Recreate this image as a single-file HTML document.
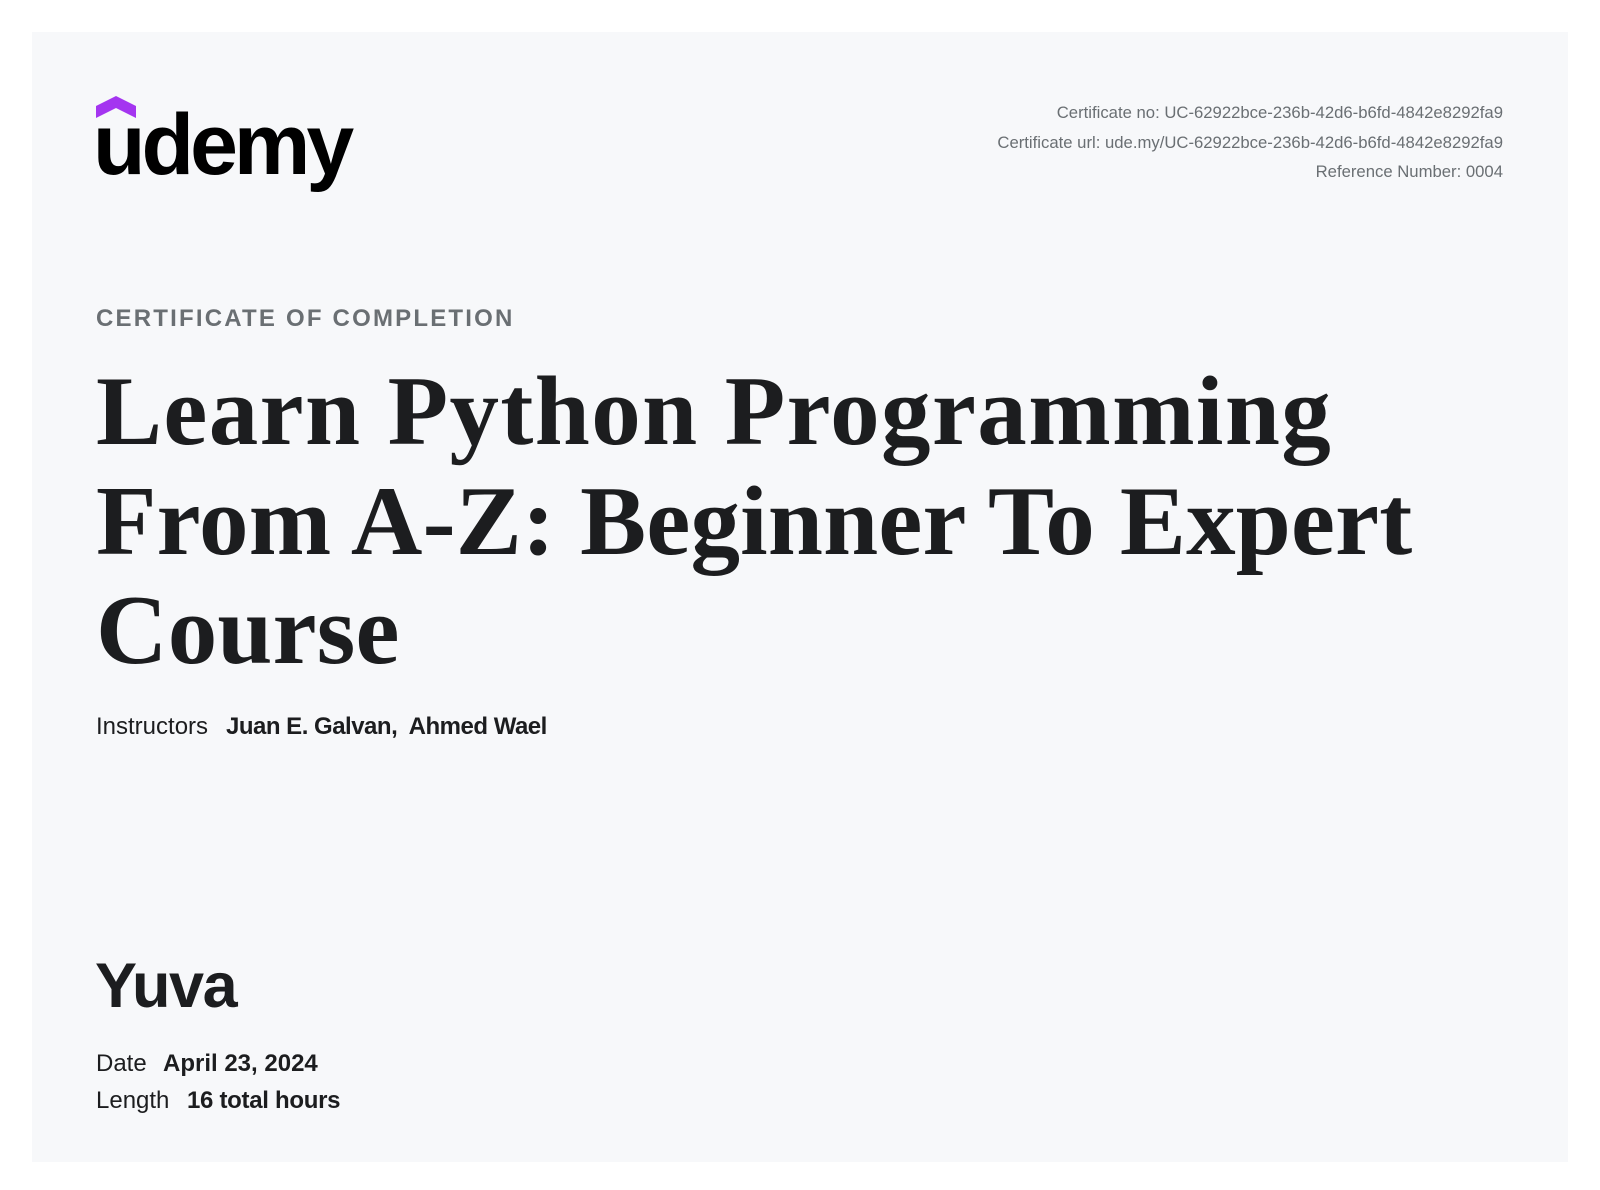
<!DOCTYPE html>
<html><head><meta charset="utf-8"><style>
*{margin:0;padding:0;box-sizing:border-box}
body{width:1600px;height:1190px;background:#fff;position:relative;overflow:hidden;font-family:"Liberation Sans",sans-serif;color:#1c1d1f}
.card{position:absolute;left:32px;top:32px;width:1536px;height:1130px;background:#f7f8fa}
.a{position:absolute;white-space:nowrap}
.meta{right:97px;font-size:16.7px;color:#6a6f73;text-align:right}
.title{left:96px;font-family:"Liberation Serif",serif;font-weight:bold;font-size:99px;letter-spacing:0.2px;color:#1c1d1f;line-height:1}
.b{font-weight:bold}
</style></head><body>
<div class="card"></div>
<svg class="a" style="left:0;top:0" width="400" height="220">
<polygon points="96,106 116,96 136,106 136,118 116,108 96,118" fill="#a435f0"/>
<text x="93" y="174" font-family="Liberation Sans" font-weight="bold" font-size="86" letter-spacing="-4" fill="#000">udemy</text>
</svg>
<div class="a meta" style="top:103px">Certificate no: UC-62922bce-236b-42d6-b6fd-4842e8292fa9</div>
<div class="a meta" style="top:133px">Certificate url: ude.my/UC-62922bce-236b-42d6-b6fd-4842e8292fa9</div>
<div class="a meta" style="top:162px">Reference Number: 0004</div>
<div class="a b" style="left:96px;top:305px;font-size:24px;letter-spacing:2.2px;color:#6a6f73">CERTIFICATE OF COMPLETION</div>
<div class="a title" style="top:362px;letter-spacing:1.4px">Learn Python Programming</div>
<div class="a title" style="top:472px">From A-Z: Beginner To Expert</div>
<div class="a title" style="top:581px">Course</div>
<div class="a" style="left:96px;top:713px;font-size:24px">Instructors</div>
<div class="a b" style="left:226px;top:713px;font-size:24px;letter-spacing:-0.5px">Juan E. Galvan,&nbsp; Ahmed Wael</div>
<div class="a b" style="left:95px;top:950px;font-size:63px;letter-spacing:-1.5px">Yuva</div>
<div class="a" style="left:96px;top:1050px;font-size:24px">Date</div>
<div class="a b" style="left:163px;top:1050px;font-size:24px">April 23, 2024</div>
<div class="a" style="left:96px;top:1087px;font-size:24px">Length</div>
<div class="a b" style="left:187px;top:1087px;font-size:24px;letter-spacing:-0.3px">16 total hours</div>
</body></html>
